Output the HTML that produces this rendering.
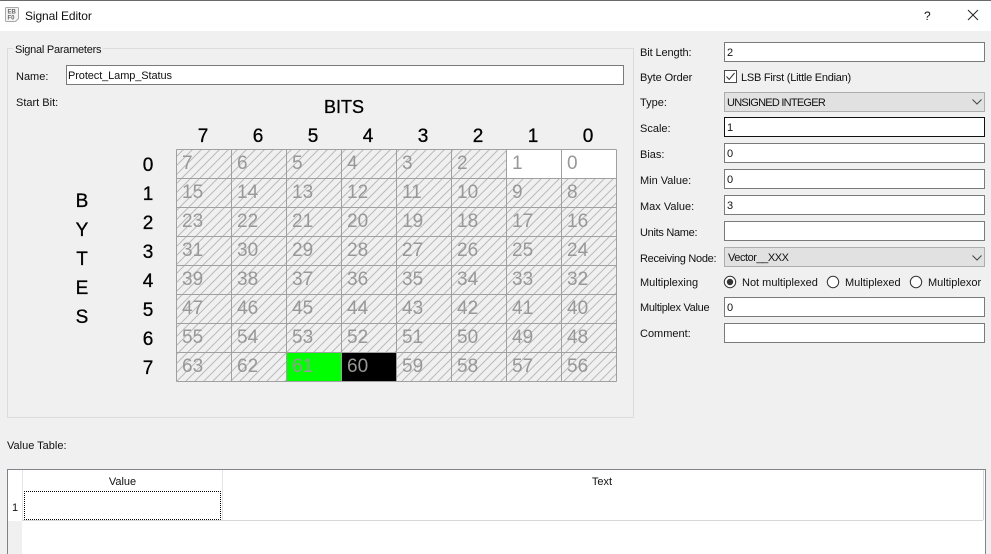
<!DOCTYPE html>
<html><head><meta charset="utf-8"><style>
html,body{margin:0;padding:0;width:991px;height:554px;overflow:hidden}
body{position:relative;background:#f0f0f0;font:11px "Liberation Sans",sans-serif;color:#111}
.a{position:absolute;white-space:nowrap;line-height:16px}
.f{position:absolute;left:724px;width:259px;height:18px;border:1px solid #7a7a7a;background:#fff;line-height:20px;padding:0;text-indent:2px}
.c{position:absolute;left:724px;width:259px;height:18px;border:1px solid #adadad;background:#e1e1e1;line-height:20px;text-indent:3px}
svg text{font-family:"Liberation Sans",sans-serif}
</style></head><body>
<div style="position:absolute;left:0;top:0;width:991px;height:31px;background:#fff;border-top:1px solid #6a6a6a;box-sizing:border-box"></div>
<svg style="position:absolute;left:5px;top:7px" width="15" height="16" viewBox="0 0 15 16"><path d="M0.5 1.5 Q0.5 0.5 1.5 0.5 H12.5 Q13.5 0.5 13.5 1.5 V11.5 L10.5 14.5 H1.5 Q0.5 14.5 0.5 13.5Z" fill="#f4f4f4" stroke="#a8a8a8"/><text x="2.5" y="6.5" font-size="6" font-weight="bold" fill="#666">EB</text><text x="2.5" y="12.5" font-size="6" font-weight="bold" fill="#666">F0</text></svg>
<div class="a" style="left:25px;top:8px;font-size:12px;letter-spacing:-.1px">Signal Editor</div>
<div class="a" style="left:924px;top:8px;font-size:12px">?</div>
<svg style="position:absolute;left:967px;top:9px" width="12" height="12"><path d="M1 1L11 11M11 1L1 11" stroke="#222" stroke-width="1" fill="none"/></svg>

<div style="position:absolute;left:7px;top:48px;width:625px;height:368px;border:1px solid #dcdcdc"></div>
<div class="a" style="left:13px;top:42px;background:#f0f0f0;padding:0 2px;letter-spacing:-.25px">Signal Parameters</div>
<div class="a" style="left:16px;top:69px">Name:</div>
<div style="position:absolute;left:66px;top:65px;width:556px;height:18px;border:1px solid #7a7a7a;background:#fff;line-height:20px;text-indent:1px;letter-spacing:-.1px">Protect_Lamp_Status</div>
<div class="a" style="left:16px;top:95px">Start Bit:</div>

<svg style="position:absolute;left:0;top:0" width="991" height="554">
<defs><pattern id="h" width="9" height="9" patternUnits="userSpaceOnUse"><path d="M-1 10L10 -1M-1 1L1 -1M8 10L10 8" stroke="#bababa" stroke-width="1" fill="none"/></pattern></defs>
<rect x="176.5" y="149.5" width="440" height="232" fill="url(#h)"/>
<rect x="506.5" y="149.5" width="110" height="29" fill="#fff"/>
<rect x="286.5" y="352.5" width="55" height="29" fill="#00ff00"/>
<rect x="341.5" y="352.5" width="55" height="29" fill="#000"/>
<path d="M176.5 149.5V381.5M231.5 149.5V381.5M286.5 149.5V381.5M341.5 149.5V381.5M396.5 149.5V381.5M451.5 149.5V381.5M506.5 149.5V381.5M561.5 149.5V381.5M616.5 149.5V381.5M176.5 149.5H616.5M176.5 178.5H616.5M176.5 207.5H616.5M176.5 236.5H616.5M176.5 265.5H616.5M176.5 294.5H616.5M176.5 323.5H616.5M176.5 352.5H616.5M176.5 381.5H616.5" stroke="#a0a0a0" fill="none"/>
<g font-size="19" fill="#989898">
<text x="182" y="169">7</text><text x="237" y="169">6</text><text x="292" y="169">5</text><text x="347" y="169">4</text><text x="402" y="169">3</text><text x="457" y="169">2</text><text x="512" y="169">1</text><text x="567" y="169">0</text>
<text x="182" y="198">15</text><text x="237" y="198">14</text><text x="292" y="198">13</text><text x="347" y="198">12</text><text x="402" y="198">11</text><text x="457" y="198">10</text><text x="512" y="198">9</text><text x="567" y="198">8</text>
<text x="182" y="227">23</text><text x="237" y="227">22</text><text x="292" y="227">21</text><text x="347" y="227">20</text><text x="402" y="227">19</text><text x="457" y="227">18</text><text x="512" y="227">17</text><text x="567" y="227">16</text>
<text x="182" y="256">31</text><text x="237" y="256">30</text><text x="292" y="256">29</text><text x="347" y="256">28</text><text x="402" y="256">27</text><text x="457" y="256">26</text><text x="512" y="256">25</text><text x="567" y="256">24</text>
<text x="182" y="285">39</text><text x="237" y="285">38</text><text x="292" y="285">37</text><text x="347" y="285">36</text><text x="402" y="285">35</text><text x="457" y="285">34</text><text x="512" y="285">33</text><text x="567" y="285">32</text>
<text x="182" y="314">47</text><text x="237" y="314">46</text><text x="292" y="314">45</text><text x="347" y="314">44</text><text x="402" y="314">43</text><text x="457" y="314">42</text><text x="512" y="314">41</text><text x="567" y="314">40</text>
<text x="182" y="343">55</text><text x="237" y="343">54</text><text x="292" y="343">53</text><text x="347" y="343">52</text><text x="402" y="343">51</text><text x="457" y="343">50</text><text x="512" y="343">49</text><text x="567" y="343">48</text>
<text x="182" y="372">63</text><text x="237" y="372">62</text><text x="292" y="372">61</text><text x="347" y="372">60</text><text x="402" y="372">59</text><text x="457" y="372">58</text><text x="512" y="372">57</text><text x="567" y="372">56</text>
</g>
<g font-size="19" fill="#000" stroke="#000" stroke-width=".3" text-anchor="middle">
<text x="344" y="113" font-size="18">BITS</text>
<text x="203" y="142">7</text><text x="258" y="142">6</text><text x="313" y="142">5</text><text x="368" y="142">4</text><text x="423" y="142">3</text><text x="478" y="142">2</text><text x="533" y="142">1</text><text x="588" y="142">0</text>
<text x="148" y="171">0</text><text x="148" y="200">1</text><text x="148" y="229">2</text><text x="148" y="258">3</text><text x="148" y="287">4</text><text x="148" y="316">5</text><text x="148" y="345">6</text><text x="148" y="374">7</text>
<text x="82" y="207">B</text><text x="82" y="236">Y</text><text x="82" y="265">T</text><text x="82" y="294">E</text><text x="82" y="323">S</text>
</g>
</svg>

<div class="a" style="left:640px;top:45px;letter-spacing:-.1px">Bit Length:</div>
<div class="f" style="top:42px">2</div>
<div class="a" style="left:640px;top:70px;letter-spacing:-.1px">Byte Order</div>
<svg style="position:absolute;left:724px;top:70px" width="14" height="14"><rect x=".5" y=".5" width="12" height="12" fill="#fff" stroke="#4a4a4a"/><path d="M2.5 6.5L5.2 9.5L10.5 3" stroke="#333" fill="none"/></svg>
<div class="a" style="left:741px;top:70px;letter-spacing:-.25px">LSB First (Little Endian)</div>
<div class="a" style="left:640px;top:95px">Type:</div>
<div class="c" style="top:92px;text-indent:2px;letter-spacing:-.75px">UNSIGNED INTEGER</div>
<svg style="position:absolute;left:972px;top:99px" width="10" height="6"><path d="M.5 .5L5 5L9.5 .5" stroke="#444" fill="none"/></svg>
<div class="a" style="left:640px;top:121px">Scale:</div>
<div class="f" style="top:117px;border-color:#111">1</div>
<div class="a" style="left:640px;top:147px">Bias:</div>
<div class="f" style="top:143px">0</div>
<div class="a" style="left:640px;top:173px">Min Value:</div>
<div class="f" style="top:169px">0</div>
<div class="a" style="left:640px;top:199px">Max Value:</div>
<div class="f" style="top:195px">3</div>
<div class="a" style="left:640px;top:225px;letter-spacing:-.3px">Units Name:</div>
<div class="f" style="top:221px"></div>
<div class="a" style="left:640px;top:251px;letter-spacing:-.3px">Receiving Node:</div>
<div class="c" style="top:247px;letter-spacing:-.45px">Vector__XXX</div>
<svg style="position:absolute;left:972px;top:255px" width="10" height="6"><path d="M.5 .5L5 5L9.5 .5" stroke="#444" fill="none"/></svg>
<div class="a" style="left:640px;top:275px">Multiplexing</div>
<svg style="position:absolute;left:723px;top:275px" width="200" height="14"><circle cx="7" cy="7" r="5.7" fill="#fff" stroke="#333"/><circle cx="7" cy="7" r="3.2" fill="#333"/><circle cx="110" cy="7" r="5.7" fill="#fff" stroke="#333"/><circle cx="193" cy="7" r="5.7" fill="#fff" stroke="#333"/></svg>
<div class="a" style="left:742px;top:275px">Not multiplexed</div>
<div class="a" style="left:845px;top:275px">Multiplexed</div>
<div class="a" style="left:928px;top:275px">Multiplexor</div>
<div class="a" style="left:640px;top:300px;letter-spacing:-.3px">Multiplex Value</div>
<div class="f" style="top:297px">0</div>
<div class="a" style="left:640px;top:326px">Comment:</div>
<div class="f" style="top:323px"></div>

<div class="a" style="left:7px;top:438px">Value Table:</div>
<div style="position:absolute;left:7px;top:469px;width:977px;height:84px;border:1px solid #82828a;border-bottom:none;background:#fff"></div>
<div style="position:absolute;left:8px;top:521px;width:14px;height:33px;background:#f0f0f0"></div>
<div style="position:absolute;left:22px;top:520px;width:961px;height:1px;background:#d8d8d8"></div>
<div style="position:absolute;left:222px;top:470px;width:1px;height:50px;background:#e4e4e4"></div>
<div style="position:absolute;left:22px;top:470px;width:1px;height:50px;background:#e4e4e4"></div>
<div style="position:absolute;left:983px;top:470px;width:1px;height:50px;background:#d8d8d8"></div>
<div class="a" style="left:23px;width:199px;top:474px;text-align:center">Value</div>
<div class="a" style="left:222px;width:760px;top:474px;text-align:center">Text</div>
<div class="a" style="left:12px;top:500px">1</div>
<div style="position:absolute;left:24px;top:491px;width:195px;height:27px;border:1px dotted #000;border-radius:1px"></div>
</body></html>
